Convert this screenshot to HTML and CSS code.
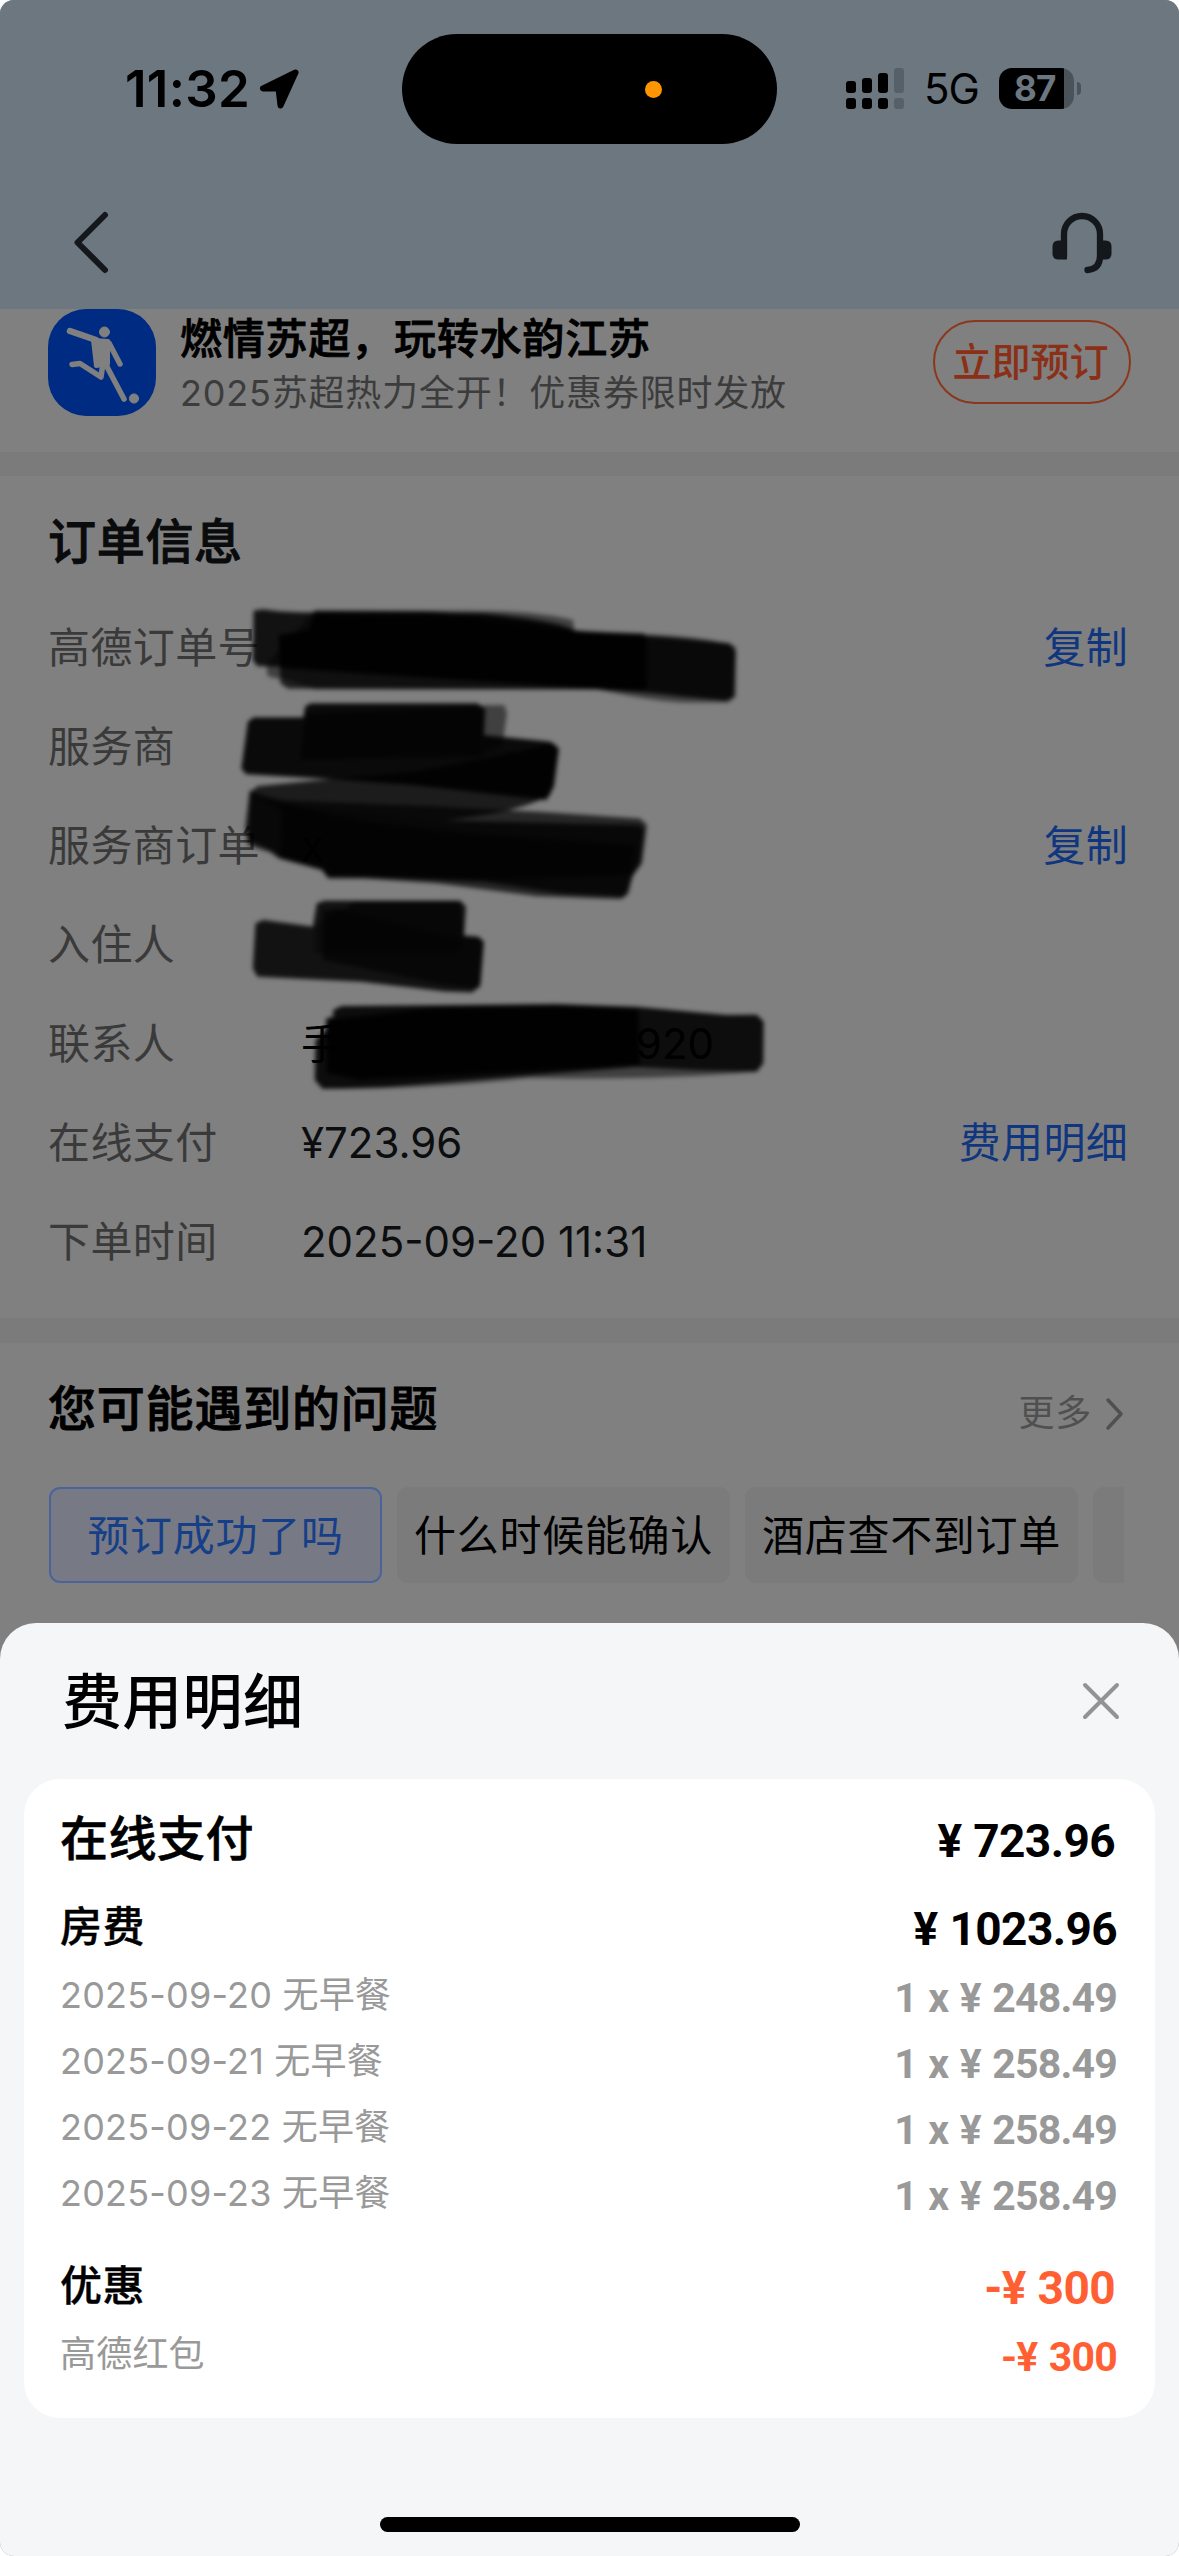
FILE: index.html
```html
<!DOCTYPE html>
<html lang="zh-CN">
<head>
<meta charset="utf-8">
<title>订单详情</title>
<link rel="stylesheet" href="styles.css">
</head>
<body>
<div class="screen">
  <header class="header">
    <div class="status">
      <div class="status-left">
        <span class="time">11:32</span>
        <svg class="locate" width="40" height="40" viewBox="0 0 40 40"><path d="M36.500 3.500 4 19.500h15.500L21.500 36.500z" fill="#000" stroke="#000" stroke-width="6" stroke-linejoin="round"/></svg>
      </div>
      <div class="island"><i class="mic"></i></div>
      <div class="status-right">
        <svg class="signal" width="58" height="42" viewBox="0 0 58 42">
          <g fill="#000"><rect x="0" y="13" width="10" height="12" rx="3"/><rect x="16" y="10" width="10" height="15" rx="3"/><rect x="32" y="5" width="10" height="20" rx="3"/><rect x="0" y="30" width="10" height="11" rx="3"/><rect x="16" y="30" width="10" height="11" rx="3"/><rect x="32" y="30" width="10" height="11" rx="3"/></g>
          <g fill="#566068"><rect x="48" y="0" width="10" height="25" rx="3"/><rect x="48" y="30" width="10" height="11" rx="3"/></g>
        </svg>
        <span class="network">5G</span>
        <span class="battery">87</span><i class="battery-nub"></i>
      </div>
    </div>
    <nav class="nav">
      <svg width="44" height="70" viewBox="0 0 44 70"><path d="M37 7 9.500 34.500 37 62" fill="none" stroke="#14181d" stroke-width="6" stroke-linecap="round" stroke-linejoin="round"/></svg>
      <svg width="62" height="62" viewBox="0 0 62 62"><path d="M13 44V22a18 18 0 0 1 36 0v22q0 13-12.500 14" fill="none" stroke="#14181d" stroke-width="6.300" stroke-linecap="round"/><path d="M16 28.500v19H7.500q-6 0-6-6v-7q0-6 6-6zM46 28.500v19h8.500q6 0 6-6v-7q0-6-6-6z" fill="#14181d"/></svg>
    </nav>
  </header>

  <section class="promo">
    <svg class="promo-icon" width="108" height="107" viewBox="0 0 108 107">
      <rect width="108" height="107" rx="38" fill="#002b82"/>
      <g fill="#808080" stroke="#808080" stroke-linecap="round" stroke-linejoin="round">
        <circle cx="56.500" cy="23" r="5"/>
        <path d="M22 22 48 31" stroke-width="6.500" fill="none"/>
        <path d="M45 31 60 32 60 55 48 57z" stroke-width="4"/>
        <path d="M61 34 72 55" stroke-width="5.500" fill="none"/>
        <path d="M24 55.500 32 54.500 53 68 55 54" stroke-width="5.500" fill="none"/>
        <path d="M57 54 76 90" stroke-width="5.500" fill="none"/>
        <circle cx="86" cy="89.500" r="4.600"/>
      </g>
    </svg>
    <div class="promo-text">
      <div class="promo-title">燃情苏超，玩转水韵江苏</div>
      <div class="promo-sub">2025苏超热力全开！优惠券限时发放</div>
    </div>
    <button class="promo-btn">立即预订</button>
  </section>

  <section class="order">
    <h2 class="section-title order-title">订单信息</h2>
    <div class="row"><span class="label">高德订单号</span><span class="value"></span><a class="link">复制</a></div>
    <div class="row"><span class="label">服务商</span><span class="value"></span></div>
    <div class="row"><span class="label">服务商订单</span><span class="value ink">x</span><a class="link">复制</a></div>
    <div class="row"><span class="label">入住人</span><span class="value"></span></div>
    <div class="row"><span class="label">联系人</span><span class="value ink contact"><span>手</span><span>920</span></span></div>
    <div class="row"><span class="label">在线支付</span><span class="value">¥723.96</span><a class="link">费用明细</a></div>
    <div class="row"><span class="label">下单时间</span><span class="value">2025-09-20 11:31</span></div>
    <svg class="marker" width="600" height="520" viewBox="0 0 1568 1560" preserveAspectRatio="none">
      <defs><filter id="soft" x="-5%" y="-5%" width="110%" height="110%"><feGaussianBlur stdDeviation="6"/></filter></defs>
      <g filter="url(#soft)" fill="#000">
        <path opacity=".5" d="M175 250V285Q185 295 215 295L300 328H1040Q1200 370 1300 368H1380L1400 350V200Q1340 170 1150 162L978 150 975 120Q880 92 700 92H300z"/>
        <path opacity=".86" d="M140 92 165 88Q230 100 300 96L740 100Q960 125 980 155 1100 160 1300 180L1385 190 1400 215 1395 350 1375 362 1250 348Q1150 335 1040 328L600 290 260 262 150 258 138 240z"/>
        <path opacity=".75" d="M205 165 285 150 300 92 600 94Q800 110 1000 155L1160 160 1168 180V320L1150 334 1040 328 230 326 210 310z"/>
        <path opacity=".8" d="M205 165 285 150 300 110 700 120 1000 160 1160 165 1165 320 1040 325 600 295 215 265z"/>

        <path opacity=".5" d="M740 375H795L802 400 790 500 740 520z"/>
        <path opacity=".92" d="M140 412H270L275 378 290 370H725L745 385 742 465 915 485 938 505 925 620 905 660 560 615 340 597 120 582 108 565 125 425z"/>
        <path opacity=".6" d="M275 400 740 380V530L260 540z"/>

        <path opacity=".78" d="M300 602 560 575 740 535 925 490 935 510 915 645Q850 685 740 705L640 722 220 690 128 640 150 618z"/>
        <path opacity=".7" d="M130 630Q170 652 230 662L600 678 900 696 1150 716 1168 735 1155 850 1130 888 1120 940 1100 958 880 948 620 910 430 896H335L318 870 205 835 185 818 125 795 118 740z"/>
        <path opacity=".8" d="M130 640Q230 690 400 700L640 722 1150 735 1160 750 1150 850 1130 888 1110 950 940 940 740 905 430 890H335L318 865 205 830 185 810 125 780z"/>
        <path opacity=".6" d="M215 680Q480 735 700 760L1140 795 1125 885 740 900 335 890 320 868 210 835z"/>

        <path opacity=".86" d="M145 1030 165 1020 295 1040 305 970 325 962H680L695 980 690 1066 728 1070 742 1085 733 1215 712 1237 640 1234 420 1205 150 1190 138 1165z"/>
        <path opacity=".65" d="M385 985 400 965H680L690 1070 728 1072 740 1090 730 1225 640 1215 320 1140 320 990z"/>
        <path opacity=".4" d="M300 1040 360 985 690 1080 670 1120 300 1120z"/>

        <path opacity=".9" d="M348 1290 370 1278 930 1272 1140 1280 1375 1305 1455 1304 1473 1325 1472 1450 1455 1475 1300 1470 1140 1460 760 1495 480 1520 320 1526 300 1500 302 1380 330 1350 330 1315 348 1310z"/>
        <path opacity=".5" d="M310 1526Q540 1532 860 1494 1200 1500 1450 1476L1140 1455z"/>
        <path opacity=".9" d="M330 1320 600 1285 960 1278 1145 1288 1150 1455 740 1482 420 1500 330 1480z"/>
      </g>
    </svg>
  </section>

  <section class="faq">
    <div class="faq-head">
      <h2 class="section-title faq-title">您可能遇到的问题</h2>
      <a class="more">更多<svg width="20" height="34" viewBox="0 0 20 34"><path d="M4 3 17 17 4 31" fill="none" stroke="#505050" stroke-width="3.500" stroke-linecap="round" stroke-linejoin="round"/></svg></a>
    </div>
    <div class="chips">
      <span class="chip chip-on">预订成功了吗</span>
      <span class="chip">什么时候能确认</span>
      <span class="chip">酒店查不到订单</span>
      <span class="chip"></span>
    </div>
  </section>

  <div class="sheet">
    <div class="sheet-head">
      <h1 class="sheet-title">费用明细</h1>
      <svg width="38" height="38" viewBox="0 0 38 38"><path d="M3 3 35 35M35 3 3 35" stroke="#939393" stroke-width="4" stroke-linecap="round"/></svg>
    </div>
    <div class="card">
      <div class="fee fee-total"><span>在线支付</span><b class="p-lg">¥ 723.96</b></div>
      <div class="fee fee-group"><span>房费</span><b class="p-lg flush">¥ 1023.96</b></div>
      <div class="fee fee-item"><span>2025-09-20 无早餐</span><b class="p-sm">1 x ¥ 248.49</b></div>
      <div class="fee fee-item"><span>2025-09-21 无早餐</span><b class="p-sm">1 x ¥ 258.49</b></div>
      <div class="fee fee-item"><span>2025-09-22 无早餐</span><b class="p-sm">1 x ¥ 258.49</b></div>
      <div class="fee fee-item"><span>2025-09-23 无早餐</span><b class="p-sm">1 x ¥ 258.49</b></div>
      <div class="fee fee-group fee-off"><span>优惠</span><b class="p-lg off">-¥ 300</b></div>
      <div class="fee fee-item"><span>高德红包</span><b class="p-sm off">-¥ 300</b></div>
    </div>
    <i class="home-bar"></i>
  </div>
</div>
</body>
</html>
```
FILE: styles.css
```css
* { box-sizing: border-box; }
body { margin: 0; background: #fff; }
.screen {
  position: relative;
  width: 1179px;
  height: 2556px;
  overflow: hidden;
  border-radius: 14px;
  background: #808080;
  font-family: Inter, "Noto Sans CJK SC", sans-serif;
  font-size: 42px;
  line-height: 1.2;
  letter-spacing: .7px;
  color: #000;
}
h1, h2 { margin: 0; }
svg { display: block; flex: none; }

.header { height: 309px; background: #6c7780; }
.status { height: 178px; display: grid; grid-template-columns: 402px 375px 402px; align-items: center; }
.status-left { display: flex; align-items: center; padding-left: 125px; gap: 11px; }
.time { width: 123px; font-size: 51px; font-weight: 600; letter-spacing: .3px; white-space: nowrap; }
.island { height: 110px; border-radius: 55px; background: #000; display: flex; align-items: center; justify-content: flex-end; padding-right: 115px; }
.mic { width: 17px; height: 17px; border-radius: 50%; background: #ff9500; }
.status-right { display: flex; align-items: center; padding-left: 69px; }
.network { width: 74px; padding-left: 20px; font-size: 42px; letter-spacing: -1px; white-space: nowrap; }
.battery { width: 75px; height: 41px; margin-left: 21px; border-radius: 13px; background: linear-gradient(90deg, #000 65px, #4b535a 65px); color: #6c7780; font-size: 35px; font-weight: 700; line-height: 41px; letter-spacing: -.8px; padding-left: 15px; }
.battery-nub { width: 4px; height: 13px; margin-left: 3px; border-radius: 0 4px 4px 0; background: #4b535a; }
.status-right .signal { margin-bottom: -1px; }
.nav { height: 131px; display: flex; justify-content: space-between; align-items: center; padding: 0 66px 2px 68px; }

.promo { height: 143px; display: flex; align-items: flex-start; padding: 0 48px; }
.promo-text { flex: 1; padding: 3px 0 0 24px; white-space: nowrap; }
.promo-title { font-size: 42px; font-weight: 500; line-height: 54px; letter-spacing: .8px; -webkit-text-stroke: .8px currentColor; }
.promo-sub { font-size: 36px; line-height: 54px; letter-spacing: .8px; color: #3c3c3c; }
.promo-btn { width: 198px; height: 84px; margin-top: 11px; padding: 0 3px 0 0; border: 2px solid #8b371e; border-radius: 42px; background: none; color: #8b2f17; font: 500 39px/80px Inter, "Noto Sans CJK SC", sans-serif; }

.order { position: relative; height: 891px; border-top: 24px solid #7b7b7c; border-bottom: 25px solid #7b7b7c; }
.section-title { font-size: 48px; font-weight: 500; letter-spacing: .7px; line-height: 60px; -webkit-text-stroke: .9px currentColor; }
.order-title { padding: 36px 0 27px 48px; color: #0a0b0c; }
.row { height: 99px; display: flex; align-items: center; padding: 0 51px 0 48px; white-space: nowrap; }
.label { width: 253px; color: #3a3a3a; letter-spacing: .4px; }
.value { flex: 1; color: #0c0d0e; letter-spacing: 0; }
.ink { color: #000; }
.contact { display: flex; justify-content: space-between; flex: none; width: 413px; }
.link { color: #10367f; letter-spacing: .3px; }
.marker { position: absolute; left: 200px; top: 104px; }

.faq { padding: 36px 55px 0 48px; }
.faq-head { display: flex; justify-content: space-between; align-items: center; height: 60px; }
.faq-title { letter-spacing: .8px; }
.more { display: flex; align-items: center; gap: 12px; padding-top: 9px; font-size: 36px; color: #505050; }
.chips { display: flex; gap: 15px; margin: 48px 0 0 1px; overflow: hidden; }
.chip { flex: 0 0 333px; height: 96px; border-radius: 11px; background: #7b7b7c; line-height: 98px; text-align: center; white-space: nowrap; }
.chip-on { background: #777a84; border: 2px solid #4a649a; line-height: 94px; color: #173f88; }

.sheet { position: absolute; left: 0; right: 0; bottom: 0; height: 933px; padding: 0 24px; border-radius: 36px 36px 0 0; background: #f5f6f8; }
.sheet-head { height: 156px; display: flex; align-items: center; justify-content: space-between; padding: 0 35px 0 38px; }
.sheet-title { padding-top: 2px; font-size: 60px; font-weight: 500; letter-spacing: .3px; line-height: 72px; }
.card { height: 639px; padding: 14px 38px 0 36px; border-radius: 36px; background: #fff; }
.fee { display: flex; justify-content: space-between; align-items: center; white-space: nowrap; }
.fee-total { height: 92px; font-size: 48px; font-weight: 500; letter-spacing: .5px; -webkit-text-stroke: .6px currentColor; }
.fee-group { height: 78px; padding-top: 6px; font-weight: 500; letter-spacing: .4px; }
.fee-group span { -webkit-text-stroke: .4px currentColor; }
.fee-item { height: 66px; font-size: 36px; color: #999; letter-spacing: .2px; }
.fee-off { margin-top: 17px; }
.p-lg, .p-sm { font-family: Roboto, sans-serif; font-weight: 700; padding-top: 6px; -webkit-text-stroke: 0; }
.p-lg { font-size: 46px; letter-spacing: -.6px; word-spacing: 1px; padding-right: 2px; }
.flush { padding-right: 0; }
.p-sm { font-size: 41px; letter-spacing: -.8px; word-spacing: 2px; }
.off { color: #ff5f33; }
.home-bar { display: block; width: 420px; height: 15px; margin: 99px auto 0; border-radius: 8px; background: #000; }
```
